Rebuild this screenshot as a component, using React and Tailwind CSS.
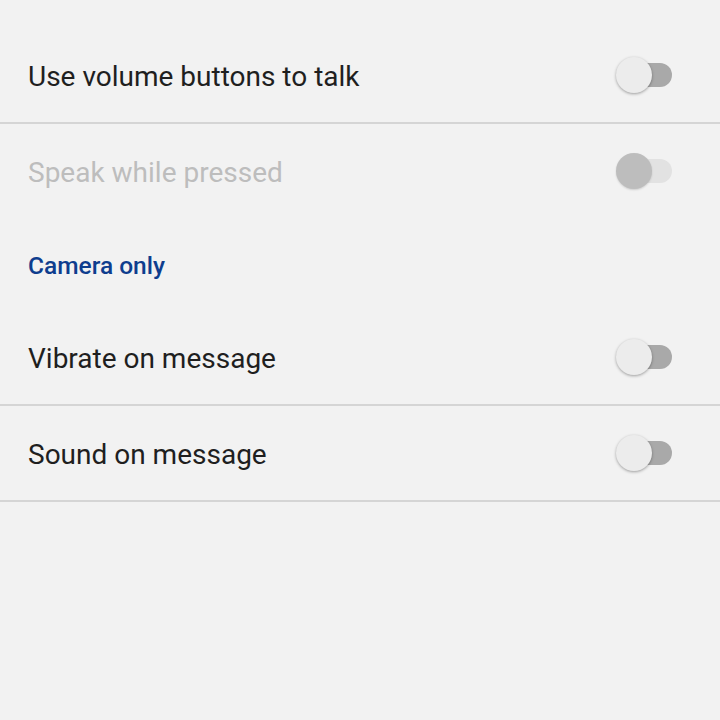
import React from "react";

function Switch({ disabled }) {
  return (
    <div className="relative w-[56px] h-[36px] flex items-center shrink-0 -mt-[4px]">
      <div
        className={
          "absolute left-[8px] right-0 h-[24px] rounded-full " +
          (disabled ? "bg-[#e2e2e2]" : "bg-[#a9a9a9]")
        }
      />
      <div
        className={
          "absolute left-0 w-[36px] h-[36px] rounded-full " +
          (disabled
            ? "bg-[#bdbdbd] shadow-[0_1px_2px_rgba(0,0,0,0.15)]"
            : "bg-[#ececec] shadow-[0_1px_3px_rgba(0,0,0,0.35)]")
        }
      />
    </div>
  );
}

function Row({ label, disabled, divider }) {
  return (
    <>
      <div className="h-[94px] flex items-center justify-between pl-[28px] pr-[48px] pt-[4px]">
        <span
          className={
            "text-[28px] leading-none " +
            (disabled ? "text-[#bdbdbd]" : "text-[#1f1f1f]")
          }
        >
          {label}
        </span>
        <Switch disabled={disabled} />
      </div>
      {divider && <div className="h-[2px] bg-[#d5d5d5]" />}
    </>
  );
}

export default function App() {
  return (
    <div
      className="w-[720px] h-[720px] bg-[#f2f2f2] pt-[28px] overflow-hidden"
      style={{ fontFamily: "Roboto, 'Noto Sans', sans-serif" }}
    >
      <Row label="Use volume buttons to talk" divider />
      <Row label="Speak while pressed" disabled />
      <div className="h-[92px] flex items-center pl-[28px] pt-[4px]">
        <span className="text-[24.5px] leading-none font-medium text-[#0e3d8e]">
          Camera only
        </span>
      </div>
      <Row label="Vibrate on message" divider />
      <Row label="Sound on message" divider />
    </div>
  );
}
